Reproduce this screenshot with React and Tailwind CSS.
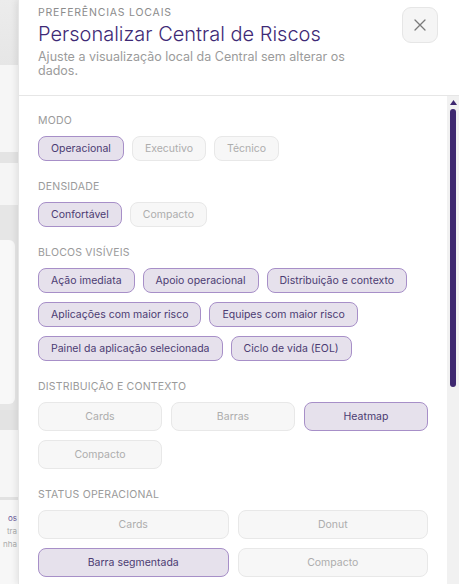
import React from "react";

const FONT = { fontFamily: "Inter, 'Noto Sans', sans-serif" };

function Label({ children }) {
  return (
    <div className="text-[10.5px] leading-[16px] uppercase tracking-[0.2px] text-[#9a9a9a]">
      {children}
    </div>
  );
}

function Chip({ children, on }) {
  return (
    <div
      className={
        "h-[25px] px-[12px] rounded-[8px] border flex items-center text-[10.5px] whitespace-nowrap " +
        (on
          ? "bg-[#e6e1ec] border-[#a78fc8] text-[#4b3b72]"
          : "bg-[#f7f7f7] border-[#e8e8e8] text-[#adadad]")
      }
    >
      {children}
    </div>
  );
}

function Tile({ children, on }) {
  return (
    <div
      className={
        "h-[29px] rounded-[8px] border flex items-center justify-center text-[10.5px] whitespace-nowrap " +
        (on
          ? "bg-[#e6e1ec] border-[#a78fc8] text-[#4b3b72]"
          : "bg-[#f7f7f7] border-[#e8e8e8] text-[#adadad]")
      }
    >
      {children}
    </div>
  );
}

function LeftStrip() {
  return (
    <div className="w-[18px] shrink-0 flex flex-col overflow-hidden">
      <div className="h-[65px] bg-gradient-to-b from-[#ececec] to-[#e6e6e6]" />
      <div className="h-[87px] bg-[#f6f6f6]" />
      <div className="h-[11px] bg-[#e4e4e4]" />
      <div className="h-[42px] bg-[#f5f5f5]" />
      <div className="h-[205px] bg-[#e6e6e6] pt-[35px] pb-[6px]">
        <div className="h-full w-[15px] bg-[#f8f8f8] rounded-r-[6px]" />
      </div>
      <div className="h-[20px] bg-[#e3e3e3]" />
      <div className="h-[70px] bg-[#f6f6f6] border-b-[3px] border-[#e2e2e2]" />
      <div className="flex-1 bg-[#f7f7f7] pt-[12px] text-[8px] leading-[13px] flex flex-col items-end pr-[1px]">
        <div className="text-[#6a5a9a]">os</div>
        <div className="text-[#aaaaaa]">tra</div>
        <div className="text-[#aaaaaa]">nha</div>
      </div>
    </div>
  );
}

export default function App() {
  return (
    <div className="w-[459px] h-[584px] flex overflow-hidden bg-white" style={FONT}>
      <LeftStrip />
      <div className="flex-1 flex flex-col bg-white shadow-[-2px_0_6px_rgba(0,0,0,0.08)] border-l border-[#e6e6e6] min-w-0">
        {/* header */}
        <div className="h-[96px] shrink-0 border-b border-[#e6e6e6] flex pl-[19px] pr-[21px] pt-[7px]">
          <div className="flex-1 min-w-0">
            <div className="text-[10.5px] leading-[12px] uppercase tracking-[0.8px] text-[#8c8c8c]">
              Preferências locais
            </div>
            <div className="mt-[3px] text-[20px] leading-[24px] font-light text-[#3e2a76]">
              Personalizar Central de Riscos
            </div>
            <div className="mt-[4px] text-[12.5px] leading-[14px] text-[#9b9b9b]">
              Ajuste a visualização local da Central sem alterar os
              <br />
              dados.
            </div>
          </div>
          <div className="w-[36px] h-[36px] rounded-[9px] bg-[#f5f5f5] border border-[#e6e6e6] flex items-center justify-center shrink-0">
            <svg width="12" height="12" viewBox="0 0 12 12">
              <path d="M1 1 L11 11 M11 1 L1 11" stroke="#7a7a7a" strokeWidth="1.3" strokeLinecap="round" />
            </svg>
          </div>
        </div>
        {/* body */}
        <div className="flex-1 flex min-h-0">
          <div className="flex-1 overflow-hidden pl-[19px] pr-[19px] pt-[17px] flex flex-col gap-[18px]">
            <div className="flex flex-col gap-[7px]">
              <Label>Modo</Label>
              <div className="flex gap-[8px]">
                <Chip on>Operacional</Chip>
                <Chip>Executivo</Chip>
                <Chip>Técnico</Chip>
              </div>
            </div>
            <div className="flex flex-col gap-[7px]">
              <Label>Densidade</Label>
              <div className="flex gap-[8px]">
                <Chip on>Confortável</Chip>
                <Chip>Compacto</Chip>
              </div>
            </div>
            <div className="flex flex-col gap-[7px]">
              <Label>Blocos visíveis</Label>
              <div className="flex flex-wrap gap-x-[8px] gap-y-[9px]">
                <Chip on>Ação imediata</Chip>
                <Chip on>Apoio operacional</Chip>
                <Chip on>Distribuição e contexto</Chip>
                <Chip on>Aplicações com maior risco</Chip>
                <Chip on>Equipes com maior risco</Chip>
                <Chip on>Painel da aplicação selecionada</Chip>
                <Chip on>Ciclo de vida (EOL)</Chip>
              </div>
            </div>
            <div className="flex flex-col gap-[7px]">
              <Label>Distribuição e contexto</Label>
              <div className="grid grid-cols-3 gap-[9px]">
                <Tile>Cards</Tile>
                <Tile>Barras</Tile>
                <Tile on>Heatmap</Tile>
                <Tile>Compacto</Tile>
              </div>
            </div>
            <div className="flex flex-col gap-[7px]">
              <Label>Status operacional</Label>
              <div className="grid grid-cols-2 gap-[9px]">
                <Tile>Cards</Tile>
                <Tile>Donut</Tile>
                <Tile on>Barra segmentada</Tile>
                <Tile>Compacto</Tile>
              </div>
            </div>
          </div>
          {/* scrollbar */}
          <div className="w-[12px] shrink-0 bg-[#f1f1f1] flex flex-col items-center pt-[4px]">
            <svg width="7" height="5" viewBox="0 0 7 5">
              <path d="M3.5 0 L7 5 L0 5 Z" fill="#3e2870" />
            </svg>
            <div className="mt-[4px] w-[6px] h-[278px] rounded-full bg-[#3e2870]" />
          </div>
        </div>
      </div>
    </div>
  );
}
